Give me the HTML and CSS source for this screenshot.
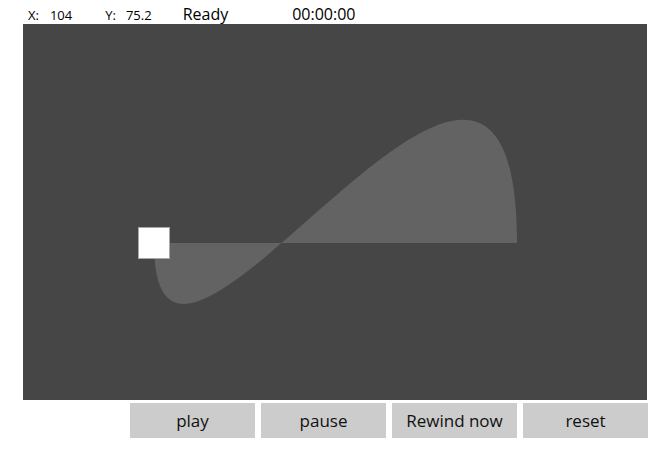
FILE: index.html
```html
<!DOCTYPE html>
<html>
<head>
<meta charset="utf-8">
<link rel="stylesheet" href="styles.css">
</head>
<body>
<div class="app">
  <div class="status">
    <span class="coord lbl-x">X:</span><span class="coord val-x">104</span>
    <span class="coord lbl-y">Y:</span><span class="coord val-y">75.2</span>
    <span class="state">Ready</span>
    <span class="time">00:00:00</span>
  </div>
  <div class="canvas">
    <svg class="plot" width="624" height="376" viewBox="0 0 624 376">
      <path d="M131 219 C131 469 494 -156 494 219 Z" fill="#636363"/>
      <rect x="115.5" y="203.5" width="31" height="31" fill="#ffffff" stroke="#a8a8a8" stroke-width="1"/>
    </svg>
  </div>
  <div class="controls">
    <button class="btn">play</button>
    <button class="btn">pause</button>
    <button class="btn">Rewind now</button>
    <button class="btn">reset</button>
  </div>
</div>
</body>
</html>
```

FILE: styles.css
```css
html, body {
  margin: 0;
  padding: 0;
  background: #ffffff;
}
.app {
  width: 660px;
  height: 450px;
  font-family: "Open Sans", "Noto Sans", sans-serif;
  color: #000;
}
.status {
  height: 24px;
  display: flex;
  align-items: baseline;
  padding-left: 28px;
  padding-top: 5px;
  box-sizing: border-box;
  white-space: nowrap;
  overflow: hidden;
}
.coord {
  font-size: 13px;
  line-height: 18px;
}
.val-x { margin-left: 11px; }
.lbl-y { margin-left: 33px; }
.val-y { margin-left: 10px; }
.state {
  font-size: 16px;
  line-height: 18px;
  margin-left: 31px;
}
.time {
  font-size: 16px;
  line-height: 18px;
  margin-left: 64px;
}
.canvas {
  margin-left: 23px;
  width: 624px;
  height: 376px;
  background: #464646;
}
.plot {
  display: block;
}
.controls {
  display: flex;
  gap: 6px;
  padding-left: 130px;
  margin-top: 3px;
}
.btn {
  width: 125px;
  height: 35px;
  border: none;
  margin: 0;
  padding: 0;
  background: #cccccc;
  font-family: "Open Sans", "Noto Sans", sans-serif;
  font-size: 17px;
  color: #111;
}
```
